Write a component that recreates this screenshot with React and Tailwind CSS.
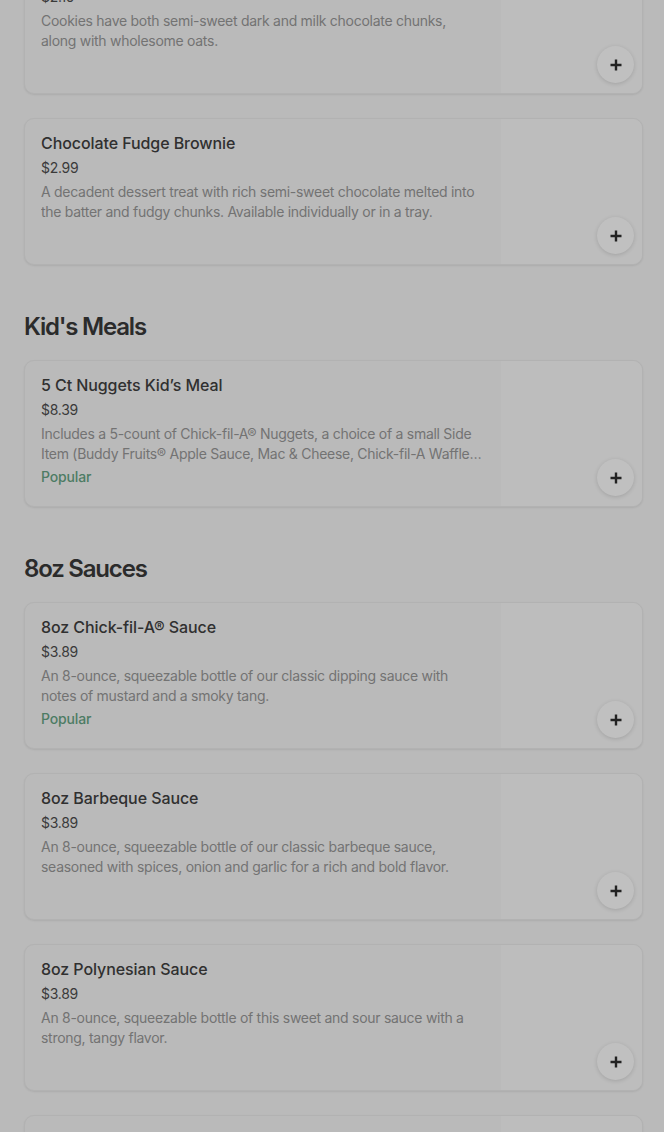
import React from 'react';

const sections = [
  {
    title: null,
    items: [
      {
        name: 'Chocolate Chunk Cookie',
        price: '$2.19',
        desc: 'Cookies have both semi-sweet dark and milk chocolate chunks, along with wholesome oats.',
      },
      {
        name: 'Chocolate Fudge Brownie',
        price: '$2.99',
        desc: 'A decadent dessert treat with rich semi-sweet chocolate melted into the batter and fudgy chunks. Available individually or in a tray.',
      },
    ],
  },
  {
    title: "Kid's Meals",
    items: [
      {
        name: '5 Ct Nuggets Kid’s Meal',
        price: '$8.39',
        desc: 'Includes a 5-count of Chick-fil-A® Nuggets, a choice of a small Side Item (Buddy Fruits® Apple Sauce, Mac & Cheese, Chick-fil-A Waffle Potato Fries®), a kid’s drink and a treat.',
        popular: true,
      },
    ],
  },
  {
    title: '8oz Sauces',
    items: [
      {
        name: '8oz Chick-fil-A® Sauce',
        price: '$3.89',
        desc: 'An 8-ounce, squeezable bottle of our classic dipping sauce with notes of mustard and a smoky tang.',
        popular: true,
      },
      {
        name: '8oz Barbeque Sauce',
        price: '$3.89',
        desc: 'An 8-ounce, squeezable bottle of our classic barbeque sauce, seasoned with spices, onion and garlic for a rich and bold flavor.',
      },
      {
        name: '8oz Polynesian Sauce',
        price: '$3.89',
        desc: 'An 8-ounce, squeezable bottle of this sweet and sour sauce with a strong, tangy flavor.',
      },
      {
        name: '8oz Garden Herb Ranch Sauce',
        price: '$3.89',
        desc: 'An 8-ounce, squeezable bottle of our creamy ranch sauce.',
      },
    ],
  },
];

function PlusIcon() {
  return (
    <svg width="14" height="14" viewBox="0 0 14 14" fill="none">
      <path d="M7 1.5v11M1.5 7h11" stroke="#222" strokeWidth="2.4" />
    </svg>
  );
}

function ItemCard({ item }) {
  return (
    <div className="relative flex h-[147px] w-[619px] overflow-hidden rounded-[10px] border border-[#b2b2b2] bg-[#bababa] shadow-[0_1px_2px_rgba(0,0,0,0.08)]">
      <div className="flex-1 pl-4 pt-[13px] pr-4">
        <div className="text-[16px] leading-[22px] font-medium tracking-[-0.005em] text-[#303030]">{item.name}</div>
        <div className="mt-1 text-[14px] leading-5 tracking-[-0.02em] text-[#3a3a3a]">{item.price}</div>
        <p className="mt-1 w-[442px] line-clamp-2 text-[14px] leading-5 tracking-[-0.02em] text-[#737373]">{item.desc}</p>
        {item.popular && (
          <div className="mt-[3px] text-[14px] leading-5 font-medium tracking-[-0.01em] text-[#4d7c64]">Popular</div>
        )}
      </div>
      <div className="w-[141px] shrink-0 bg-[#bdbdbd]" />
      <button className="absolute right-[8px] bottom-[10px] flex h-[37px] w-[37px] items-center justify-center rounded-full bg-[#c0c0c0] shadow-[0_1px_4px_rgba(0,0,0,0.14)]">
        <PlusIcon />
      </button>
    </div>
  );
}

export default function App() {
  return (
    <div
      className="min-h-[1132px] bg-[#bababa] pl-6 pt-0"
      style={{ fontFamily: 'Inter, "Noto Sans", sans-serif' }}
    >
      <div className="-mt-[53px]">
        {sections.map((sec, si) => (
          <section key={si} className={si === 0 ? '' : 'pt-[46px]'}>
            {sec.title && (
              <h2 className="mb-[17px] text-[24px] leading-8 font-semibold tracking-[-0.05em] text-[#2b2b2b]">
                {sec.title}
              </h2>
            )}
            <div className="flex flex-col gap-6">
              {sec.items.map((it, i) => (
                <ItemCard key={i} item={it} />
              ))}
            </div>
          </section>
        ))}
      </div>
    </div>
  );
}
